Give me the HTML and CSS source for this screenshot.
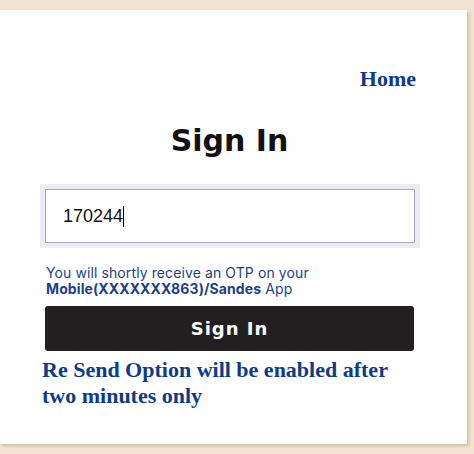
FILE: index.html
```html
<!DOCTYPE html>
<html>
<head>
<meta charset="utf-8">
<link rel="stylesheet" href="styles.css">
</head>
<body>
<div class="card">
  <div class="top">
    <a class="home" href="#">Home</a>
  </div>
  <h1 class="title">Sign In</h1>
  <div class="field">
    <div class="input"><span class="val">170244</span><span class="caret"></span></div>
  </div>
  <p class="otp">You will shortly receive an OTP on your<br><b>Mobile(XXXXXXX863)/Sandes</b> App</p>
  <button class="btn">Sign In</button>
  <p class="resend">Re Send Option will be enabled after<br>two minutes only</p>
</div>
</body>
</html>
```
FILE: styles.css
```css
html, body {
  margin: 0;
  padding: 0;
}
body {
  background: #f2e4d0;
  width: 474px;
  height: 454px;
  overflow: hidden;
}
.card {
  margin-top: 10px;
  width: 467px;
  height: 434px;
  background: #ffffff;
  box-shadow: 2px 2px 3px rgba(150, 120, 80, 0.35);
  box-sizing: border-box;
  padding: 0 53px 0 45px;
  display: flex;
  flex-direction: column;
}
.top {
  display: flex;
  justify-content: flex-end;
  padding-top: 57px;
  margin-right: -2px;
}
.home {
  font-family: "Liberation Serif", serif;
  font-weight: bold;
  font-size: 22px;
  color: #0b3b8c;
  text-decoration: none;
  line-height: 24px;
}
.title {
  margin: 32px 0 0 0;
  text-align: center;
  font-family: "DejaVu Sans", sans-serif;
  font-weight: 700;
  font-size: 30px;
  line-height: 36px;
  color: #111;
}
.field {
  margin: 25px 0 0 -5px;
  width: 380px;
  padding: 5px;
  box-sizing: border-box;
  background: #ececf6;
}
.input {
  height: 54px;
  border: 1px solid #a9a9b9;
  background: #fff;
  box-sizing: border-box;
  display: flex;
  align-items: center;
  padding-left: 17px;
  font-family: "Liberation Sans", sans-serif;
  font-size: 18px;
  color: #111;
}
.caret {
  display: inline-block;
  width: 1px;
  height: 21px;
  background: #000;
}
.otp {
  margin: 17px 0 0 1px;
  font-family: "Inter", sans-serif;
  font-size: 14px;
  line-height: 16px;
  letter-spacing: 0.1px;
  color: #1d3f8a;
}
.otp b {
  font-weight: 700;
}
.btn {
  margin-top: 9px;
  width: 369px;
  height: 45px;
  border: none;
  border-radius: 3px;
  background: #231f20;
  color: #fff;
  font-family: "DejaVu Sans", sans-serif;
  font-weight: bold;
  font-size: 18px;
  letter-spacing: 1px;
  padding: 0;
}
.resend {
  margin: 6px 0 0 -3px;
  font-family: "Liberation Serif", serif;
  font-weight: bold;
  font-size: 22px;
  line-height: 26px;
  color: #0b3b8c;
}
```
